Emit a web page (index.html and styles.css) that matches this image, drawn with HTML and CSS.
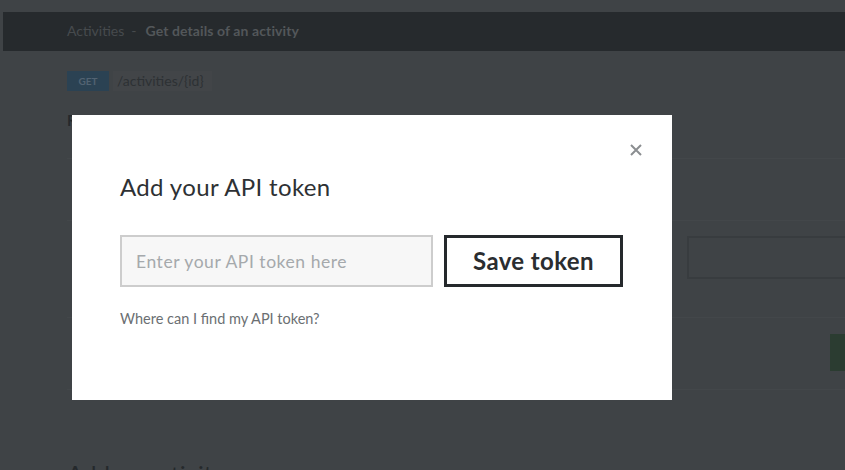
FILE: index.html
```html
<!DOCTYPE html>
<html lang="en">
<head>
<meta charset="utf-8">
<title>Get details of an activity</title>
<link rel="stylesheet" href="styles.css">
</head>
<body>
<div class="page">
  <header class="topbar">
    <span class="crumb">Activities</span>
    <span class="sep">-</span>
    <span class="crumb-current">Get details of an activity</span>
  </header>
  <main class="content">
    <div class="endpoint">
      <span class="method">GET</span>
      <span class="path">/activities/{id}</span>
    </div>
    <p class="desc">Returns the details of a specific activity</p>
    <div class="rows">
      <div class="row row-a"></div>
      <div class="row row-b"><span class="field"></span></div>
      <div class="row row-c"><span class="run"></span></div>
      <div class="row row-d"></div>
    </div>
    <h2 class="next">Add an activity</h2>
  </main>
</div>

<div class="modal" role="dialog" aria-labelledby="modal-title">
  <button class="close" aria-label="Close">
    <svg width="12" height="12" viewBox="0 0 12 12"><path d="M1 1L11 11M11 1L1 11" stroke="#8b8e91" stroke-width="2" fill="none"/></svg>
  </button>
  <h1 id="modal-title" class="modal-title">Add your API token</h1>
  <form class="token-form">
    <input class="token-input" type="text" placeholder="Enter your API token here">
    <button class="save" type="button">Save token</button>
  </form>
  <a class="help" href="#">Where can I find my API token?</a>
</div>
</body>
</html>
```

FILE: styles.css
```css
* { box-sizing: border-box; }
html, body { margin: 0; padding: 0; }
body {
  width: 845px;
  height: 470px;
  overflow: hidden;
  background: #3f4346;
  font-family: "Lato", "Open Sans", sans-serif;
}
.page {
  padding-top: 12px;
  padding-left: 3px;
}
.topbar {
  height: 39px;
  background: #262a2d;
  display: flex;
  align-items: center;
  gap: 7px;
  padding-left: 64px;
  padding-bottom: 2px;
  font-size: 14px;
}
.crumb { color: #464a4d; }
.sep { color: #464a4d; margin-right: 2px; }
.crumb-current { color: #53575a; font-weight: 700; letter-spacing: 0.1px; }

.content { padding-left: 64px; }
.endpoint {
  margin-top: 20px;
  display: flex;
  align-items: center;
  height: 20px;
}
.method {
  width: 42px;
  height: 20px;
  background: #2b4253;
  color: #526372;
  font-size: 10px;
  font-weight: 700;
  display: flex;
  align-items: center;
  justify-content: center;
}
.path {
  height: 20px;
  margin-left: 4px;
  padding: 0 8px 0 4px;
  background: #424548;
  color: #2d3134;
  font-size: 14px;
  line-height: 19px;
}
.desc {
  margin: 20px 0 0;
  font-size: 15px;
  color: #25292c;
  font-weight: 700;
}
.rows { margin-top: 29px; }
.row {
  border-top: 1px solid #43474a;
}
.row-a { height: 62px; }
.row-b {
  height: 97px;
  display: flex;
  justify-content: flex-end;
  padding-top: 15px;
}
.field {
  width: 158px;
  height: 43px;
  border: 2px solid #383c3f;
  border-right: 0;
}
.row-c {
  height: 72px;
  display: flex;
  justify-content: flex-end;
  padding-top: 16px;
}
.run {
  width: 15px;
  height: 37px;
  background: #2b3c31;
}
.row-d { height: 30px; }
.next {
  margin: 40px 0 0;
  font-size: 24px;
  font-weight: 400;
  color: #25292c;
}

.modal {
  position: absolute;
  left: 72px;
  top: 115px;
  width: 600px;
  height: 285px;
  background: #ffffff;
  padding: 57px 48px 0;
}
.close {
  position: absolute;
  left: 558px;
  top: 29px;
  width: 12px;
  height: 12px;
  padding: 0;
  border: 0;
  background: none;
  display: flex;
}
.modal-title {
  margin: 0;
  font-size: 24px;
  font-weight: 400;
  line-height: 30px;
  letter-spacing: 0.35px;
  color: #2e3134;
}
.token-form {
  margin-top: 33px;
  display: flex;
  gap: 11px;
}
.token-input {
  width: 313px;
  height: 52px;
  border: 2px solid #cdcdcd;
  background: #f7f7f7;
  padding: 0 14px;
  font-family: inherit;
  font-size: 17.5px;
  letter-spacing: 0.55px;
  color: #2e3134;
  outline: none;
}
.token-input::placeholder { color: #a5a9ac; }
.save {
  width: 179px;
  height: 52px;
  border: 3px solid #25292c;
  background: #fff;
  font-family: inherit;
  font-size: 24px;
  font-weight: 700;
  letter-spacing: 0.4px;
  color: #2a2d30;
  padding: 0 0 2px;
}
.help {
  display: block;
  margin-top: 23px;
  font-size: 14.5px;
  color: #6b6f72;
  text-decoration: none;
}
```
